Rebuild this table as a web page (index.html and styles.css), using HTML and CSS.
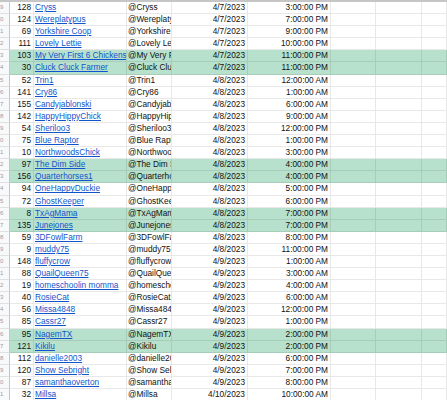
FILE: index.html
```html
<!DOCTYPE html>
<html>
<head>
<meta charset="utf-8">
<link rel="stylesheet" href="styles.css">
</head>
<body>
<div class="sheet">
  <div class="frozen-line"></div>
  <div class="row"><div class="rh">9</div><div class="c num">128</div><div class="c"><a>Cryss</a></div><div class="c">@Cryss</div><div class="c num">4/7/2023</div><div class="c num">3:00:00 PM</div><div class="c"></div><div class="c"></div><div class="c"></div></div>
  <div class="row"><div class="rh">0</div><div class="c num">124</div><div class="c"><a>Wereplatypus</a></div><div class="c">@Wereplatypus</div><div class="c num">4/7/2023</div><div class="c num">7:00:00 PM</div><div class="c"></div><div class="c"></div><div class="c"></div></div>
  <div class="row"><div class="rh">1</div><div class="c num">69</div><div class="c"><a>Yorkshire Coop</a></div><div class="c">@Yorkshire Coop</div><div class="c num">4/7/2023</div><div class="c num">9:00:00 PM</div><div class="c"></div><div class="c"></div><div class="c"></div></div>
  <div class="row"><div class="rh">2</div><div class="c num">111</div><div class="c"><a>Lovely Lettie</a></div><div class="c">@Lovely Lettie</div><div class="c num">4/7/2023</div><div class="c num">10:00:00 PM</div><div class="c"></div><div class="c"></div><div class="c"></div></div>
  <div class="row hl"><div class="rh">3</div><div class="c num">103</div><div class="c"><a>My Very First 6 Chickens</a></div><div class="c">@My Very First 6 Chickens</div><div class="c num">4/7/2023</div><div class="c num">11:00:00 PM</div><div class="c"></div><div class="c"></div><div class="c"></div></div>
  <div class="row hl"><div class="rh">4</div><div class="c num">30</div><div class="c"><a>Cluck Cluck Farmer</a></div><div class="c">@Cluck Cluck Farmer</div><div class="c num">4/7/2023</div><div class="c num">11:00:00 PM</div><div class="c"></div><div class="c"></div><div class="c"></div></div>
  <div class="row"><div class="rh">5</div><div class="c num">52</div><div class="c"><a>Trin1</a></div><div class="c">@Trin1</div><div class="c num">4/8/2023</div><div class="c num">12:00:00 AM</div><div class="c"></div><div class="c"></div><div class="c"></div></div>
  <div class="row"><div class="rh">6</div><div class="c num">141</div><div class="c"><a>Cry86</a></div><div class="c">@Cry86</div><div class="c num">4/8/2023</div><div class="c num">1:00:00 AM</div><div class="c"></div><div class="c"></div><div class="c"></div></div>
  <div class="row"><div class="rh">7</div><div class="c num">155</div><div class="c"><a>Candyjablonski</a></div><div class="c">@Candyjablonski</div><div class="c num">4/8/2023</div><div class="c num">6:00:00 AM</div><div class="c"></div><div class="c"></div><div class="c"></div></div>
  <div class="row"><div class="rh">8</div><div class="c num">142</div><div class="c"><a>HappyHippyChick</a></div><div class="c">@HappyHippyChick</div><div class="c num">4/8/2023</div><div class="c num">9:00:00 AM</div><div class="c"></div><div class="c"></div><div class="c"></div></div>
  <div class="row"><div class="rh">9</div><div class="c num">54</div><div class="c"><a>Sheriloo3</a></div><div class="c">@Sheriloo3</div><div class="c num">4/8/2023</div><div class="c num">12:00:00 PM</div><div class="c"></div><div class="c"></div><div class="c"></div></div>
  <div class="row"><div class="rh">0</div><div class="c num">75</div><div class="c"><a>Blue Raptor</a></div><div class="c">@Blue Raptor</div><div class="c num">4/8/2023</div><div class="c num">1:00:00 PM</div><div class="c"></div><div class="c"></div><div class="c"></div></div>
  <div class="row"><div class="rh">1</div><div class="c num">10</div><div class="c"><a>NorthwoodsChick</a></div><div class="c">@NorthwoodsChick</div><div class="c num">4/8/2023</div><div class="c num">3:00:00 PM</div><div class="c"></div><div class="c"></div><div class="c"></div></div>
  <div class="row hl"><div class="rh">2</div><div class="c num">97</div><div class="c"><a>The Dim Side</a></div><div class="c">@The Dim Side</div><div class="c num">4/8/2023</div><div class="c num">4:00:00 PM</div><div class="c"></div><div class="c"></div><div class="c"></div></div>
  <div class="row hl"><div class="rh">3</div><div class="c num">156</div><div class="c"><a>Quarterhorses1</a></div><div class="c">@Quarterhorses1</div><div class="c num">4/8/2023</div><div class="c num">4:00:00 PM</div><div class="c"></div><div class="c"></div><div class="c"></div></div>
  <div class="row"><div class="rh">4</div><div class="c num">94</div><div class="c"><a>OneHappyDuckie</a></div><div class="c">@OneHappyDuckie</div><div class="c num">4/8/2023</div><div class="c num">5:00:00 PM</div><div class="c"></div><div class="c"></div><div class="c"></div></div>
  <div class="row"><div class="rh">5</div><div class="c num">72</div><div class="c"><a>GhostKeeper</a></div><div class="c">@GhostKeeper</div><div class="c num">4/8/2023</div><div class="c num">6:00:00 PM</div><div class="c"></div><div class="c"></div><div class="c"></div></div>
  <div class="row hl"><div class="rh">6</div><div class="c num">8</div><div class="c"><a>TxAgMama</a></div><div class="c">@TxAgMama</div><div class="c num">4/8/2023</div><div class="c num">7:00:00 PM</div><div class="c"></div><div class="c"></div><div class="c"></div></div>
  <div class="row hl"><div class="rh">7</div><div class="c num">135</div><div class="c"><a>Junejones</a></div><div class="c">@Junejones</div><div class="c num">4/8/2023</div><div class="c num">7:00:00 PM</div><div class="c"></div><div class="c"></div><div class="c"></div></div>
  <div class="row"><div class="rh">8</div><div class="c num">59</div><div class="c"><a>3DFowlFarm</a></div><div class="c">@3DFowlFarm</div><div class="c num">4/8/2023</div><div class="c num">8:00:00 PM</div><div class="c"></div><div class="c"></div><div class="c"></div></div>
  <div class="row"><div class="rh">9</div><div class="c num">9</div><div class="c"><a>muddy75</a></div><div class="c">@muddy75</div><div class="c num">4/8/2023</div><div class="c num">11:00:00 PM</div><div class="c"></div><div class="c"></div><div class="c"></div></div>
  <div class="row"><div class="rh">0</div><div class="c num">148</div><div class="c"><a>fluffycrow</a></div><div class="c">@fluffycrow</div><div class="c num">4/9/2023</div><div class="c num">1:00:00 AM</div><div class="c"></div><div class="c"></div><div class="c"></div></div>
  <div class="row"><div class="rh">1</div><div class="c num">88</div><div class="c"><a>QuailQueen75</a></div><div class="c">@QuailQueen75</div><div class="c num">4/9/2023</div><div class="c num">3:00:00 AM</div><div class="c"></div><div class="c"></div><div class="c"></div></div>
  <div class="row"><div class="rh">2</div><div class="c num">19</div><div class="c"><a>homeschoolin momma</a></div><div class="c">@homeschoolin momma</div><div class="c num">4/9/2023</div><div class="c num">4:00:00 AM</div><div class="c"></div><div class="c"></div><div class="c"></div></div>
  <div class="row"><div class="rh">3</div><div class="c num">40</div><div class="c"><a>RosieCat</a></div><div class="c">@RosieCat</div><div class="c num">4/9/2023</div><div class="c num">6:00:00 AM</div><div class="c"></div><div class="c"></div><div class="c"></div></div>
  <div class="row"><div class="rh">4</div><div class="c num">56</div><div class="c"><a>Missa4848</a></div><div class="c">@Missa4848</div><div class="c num">4/9/2023</div><div class="c num">12:00:00 PM</div><div class="c"></div><div class="c"></div><div class="c"></div></div>
  <div class="row"><div class="rh">5</div><div class="c num">85</div><div class="c"><a>Cassr27</a></div><div class="c">@Cassr27</div><div class="c num">4/9/2023</div><div class="c num">1:00:00 PM</div><div class="c"></div><div class="c"></div><div class="c"></div></div>
  <div class="row hl"><div class="rh">6</div><div class="c num">95</div><div class="c"><a>NagemTX</a></div><div class="c">@NagemTX</div><div class="c num">4/9/2023</div><div class="c num">2:00:00 PM</div><div class="c"></div><div class="c"></div><div class="c"></div></div>
  <div class="row hl"><div class="rh">7</div><div class="c num">121</div><div class="c"><a>Kikilu</a></div><div class="c">@Kikilu</div><div class="c num">4/9/2023</div><div class="c num">2:00:00 PM</div><div class="c"></div><div class="c"></div><div class="c"></div></div>
  <div class="row"><div class="rh">8</div><div class="c num">112</div><div class="c"><a>danielle2003</a></div><div class="c">@danielle2003</div><div class="c num">4/9/2023</div><div class="c num">6:00:00 PM</div><div class="c"></div><div class="c"></div><div class="c"></div></div>
  <div class="row"><div class="rh">9</div><div class="c num">120</div><div class="c"><a>Show Sebright</a></div><div class="c">@Show Sebright</div><div class="c num">4/9/2023</div><div class="c num">7:00:00 PM</div><div class="c"></div><div class="c"></div><div class="c"></div></div>
  <div class="row"><div class="rh">0</div><div class="c num">87</div><div class="c"><a>samanthaoverton</a></div><div class="c">@samanthaoverton</div><div class="c num">4/9/2023</div><div class="c num">8:00:00 PM</div><div class="c"></div><div class="c"></div><div class="c"></div></div>
  <div class="row"><div class="rh">1</div><div class="c num">32</div><div class="c"><a>Millsa</a></div><div class="c">@Millsa</div><div class="c num">4/10/2023</div><div class="c num">10:00:00 AM</div><div class="c"></div><div class="c"></div><div class="c"></div></div>
</div>
</body>
</html>
```
FILE: styles.css
```css
* { box-sizing: border-box; }
html, body { margin: 0; padding: 0; background: #fff; }
body { overflow: hidden; }
.sheet {
  font-family: "Liberation Sans", Arial, sans-serif;
  font-size: 8.3px;
  color: #111;
}
.frozen-line {
  height: 2px;
  background: #c6c6c6;
}
.row {
  display: grid;
  grid-template-columns: 10px 24px 93px 45px 76px 83px 45px 46px 1fr;
  height: 12.1px;
  line-height: 11px;
}
.row.hl .c { background: #b7e1cd; }
.rh {
  background: #f8f9fa;
  border-right: 1px solid #c4c7c5;
  border-bottom: 1px solid #e0e0e0;
  color: #9a9a9a;
  font-size: 6px;
  text-align: right;
  padding-right: 6px;
  overflow: hidden;
  line-height: 11px;
}
.c {
  border-right: 1px solid rgba(0, 0, 0, 0.09);
  border-bottom: 1px solid rgba(0, 0, 0, 0.09);
  padding: 0 1px 0 1px;
  white-space: nowrap;
  overflow: hidden;
  text-overflow: clip;
}
.c.num { text-align: right; padding-right: 2px; }
.c a {
  color: #1155cc;
  text-decoration: underline;
}
```
